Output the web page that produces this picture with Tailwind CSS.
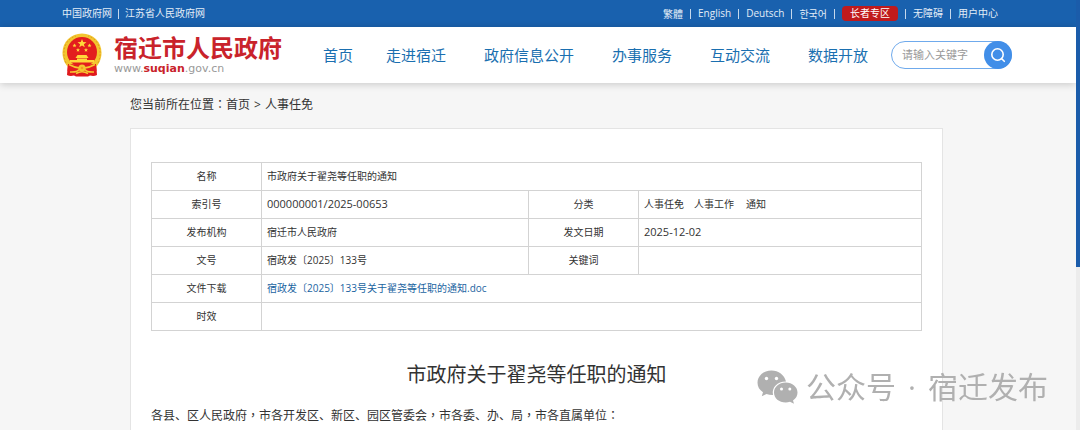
<!DOCTYPE html>
<html lang="zh-CN">
<head>
  <meta charset="UTF-8" />
  <meta name="viewport" content="width=device-width, initial-scale=1.0" />
  <title>市政府关于翟尧等任职的通知</title>
  <script src="https://cdn.jsdelivr.net/npm/@tailwindcss/browser@4"></script>
</head>
<body class="flex min-h-screen flex-col overflow-hidden bg-[#f6f6f6] pr-1 font-['Open_Sans','Noto_Sans_CJK_SC',sans-serif] text-[#333]">

  <!-- top bar -->
  <div class="bg-[#1961ae] text-[10px] leading-[27px] text-[#e3edf7]">
    <div class="mx-auto flex max-w-[952px] items-center justify-between pr-4">
      <div class="flex items-center gap-1.5">
        <a href="#">中国政府网</a>
        <span class="h-2.5 w-px bg-[#c5d8ec]"></span>
        <a href="#">江苏省人民政府网</a>
      </div>
      <div class="flex items-center gap-[7px]">
        <a href="#" lang="zh-TW" class="font-['Noto_Sans_CJK_TC',sans-serif]">繁體</a>
        <span class="h-2.5 w-px bg-[#c5d8ec]"></span>
        <a href="#" lang="en">English</a>
        <span class="h-2.5 w-px bg-[#c5d8ec]"></span>
        <a href="#" lang="de">Deutsch</a>
        <span class="h-2.5 w-px bg-[#c5d8ec]"></span>
        <a href="#" lang="ko" class="font-['Noto_Sans_CJK_KR',sans-serif]">한국어</a>
        <span class="h-2.5 w-px bg-[#c5d8ec]"></span>
        <a href="#" class="rounded bg-[#c01a1c] px-2 leading-[15px] text-white">长者专区</a>
        <span class="h-2.5 w-px bg-[#c5d8ec]"></span>
        <a href="#">无障碍</a>
        <span class="h-2.5 w-px bg-[#c5d8ec]"></span>
        <a href="#">用户中心</a>
      </div>
    </div>
  </div>

  <!-- header -->
  <header class="bg-white shadow-[0_1px_8px_rgba(0,0,0,0.2)]">
    <div class="mx-auto flex h-14 max-w-[952px] items-center pr-0.5">
      <a href="#" class="flex items-center gap-3">
        <svg class="h-11 w-10" viewBox="0 0 40 44" aria-hidden="true">
          <path d="M6 30 L5 42 Q8 43.500 12 42.500 L14 43.500 H26 L28 42.500 Q32 43.500 35 42 L34 30 Z" fill="#e0191c" />
          <path d="M20 0.500 C31 0.500 39.500 9 39.500 19.500 C39.500 26 37 31.500 33 35 L7 35 C3 31.500 0.500 26 0.500 19.500 C0.500 9 9 0.500 20 0.500 Z" fill="#f3c62f" />
          <path d="M4 30 C-1 19 3 6 14 3 M36 30 C41 19 37 6 26 3" fill="none" stroke="#dfa01f" stroke-width="1" stroke-dasharray="2 1.500" />
          <circle cx="20" cy="19" r="15" fill="#e31d1e" />
          <path d="M20 6 L21.200 9.100 L24.500 9.200 L21.900 11.200 L22.800 14.300 L20 12.500 L17.200 14.300 L18.100 11.200 L15.500 9.200 L18.800 9.100 Z" fill="#ffd83a" />
          <g fill="#ffd83a">
            <path d="M12.500 10.500 l.6 1.300 1.400.1-1.100.9.4 1.400-1.300-.8-1.300.8.4-1.400-1.100-.9 1.400-.1z" />
            <path d="M16 15 l.6 1.300 1.400.1-1.100.9.4 1.400-1.300-.8-1.300.8.4-1.400-1.100-.9 1.400-.1z" />
            <path d="M24 15 l.6 1.300 1.400.1-1.100.9.4 1.400-1.300-.8-1.300.8.4-1.400-1.100-.9 1.400-.1z" />
            <path d="M27.500 10.500 l.6 1.300 1.400.1-1.100.9.4 1.400-1.300-.8-1.300.8.4-1.400-1.100-.9 1.400-.1z" />
            <path d="M15.500 22 H24.500 L26.500 25 H13.500 Z" />
            <path d="M15 25.500 H25 V27 H32 V29.500 H8 V27 H15 Z" />
          </g>
          <path d="M6 31 Q13 30.500 17 33 Q20 29.500 23 33 Q27 30.500 34 31 L34.500 38 Q28 40 23 37.500 Q20 41 17 37.500 Q12 40 5.500 38 Z" fill="#e31d1e" />
          <path d="M7 31.500 Q13 35 20 35.500 Q27 35 33 31.500 M8 39 Q15 39.500 17 36.500 M32 39 Q25 39.500 23 36.500" fill="none" stroke="#f6c830" stroke-width="1.500" />
          <path d="M14 40.500 Q20 37 26 40.500" fill="none" stroke="#f6c830" stroke-width="1.500" />
          <circle cx="20" cy="35" r="3.600" fill="#f3c62f" />
          <circle cx="20" cy="35" r="1.300" fill="#f39a25" />
        </svg>
        <span class="flex flex-col">
          <span class="text-2xl leading-7 font-bold text-[#c9232b]">宿迁市人民政府</span>
          <span class="font-['DejaVu_Sans',sans-serif] text-[11px] leading-3.5 text-[#999]">www.<b class="text-[#c9232b]">suqian</b>.gov.cn</span>
        </span>
      </a>
      <nav class="ml-auto flex text-[15px] whitespace-nowrap text-[#1a6fb0]">
        <a href="#" class="pr-3.5">首页</a>
        <a href="#" class="px-[19px]">走进宿迁</a>
        <a href="#" class="px-[19px]">政府信息公开</a>
        <a href="#" class="px-[19px]">办事服务</a>
        <a href="#" class="px-[19px]">互动交流</a>
        <a href="#" class="px-[19px]">数据开放</a>
      </nav>
      <form class="ml-1 flex h-7 w-[121px] rounded-full border border-[#6faaec]">
        <input type="text" aria-label="搜索" placeholder="请输入关键字" class="w-0 flex-1 pl-2.5 text-[11px] outline-none placeholder:text-[#999]" />
        <button type="button" aria-label="搜索" class="-my-px -mr-px flex size-7 items-center justify-center rounded-full bg-[#418ee8]">
          <svg class="size-4" viewBox="0 0 16 16" fill="none" stroke="#fff" stroke-width="1.600" stroke-linecap="round">
            <circle cx="7.500" cy="7.500" r="5.700" />
            <path d="M11.700 11.700 L14.300 14.300" />
          </svg>
        </button>
      </form>
    </div>
  </header>

  <main class="mx-auto flex w-full max-w-[816px] flex-1 flex-col pr-[3px]">
    <div class="pt-3 pb-3.5 text-xs leading-[18px]">
      您当前所在位置<span lang="zh-TW" class="font-['Noto_Sans_CJK_TC',sans-serif]">：</span><a href="#">首页</a><span class="mx-1">&gt;</span><a href="#">人事任免</a>
    </div>

    <article class="flex-1 border border-b-0 border-[#e4e4e4] bg-white px-5 pt-[33px]">
      <table class="w-full table-fixed border-collapse text-[10px] [&_td]:border [&_td]:border-[#d3d3d3] [&_td]:px-[5px] [&_th]:border [&_th]:border-[#d3d3d3] [&_th]:font-normal [&_tr]:h-7">
        <colgroup>
          <col class="w-[110px]" />
          <col />
          <col class="w-[110px]" />
          <col class="w-[283px]" />
        </colgroup>
        <tbody>
          <tr>
            <th scope="row">名称</th>
            <td colspan="3">市政府关于翟尧等任职的通知</td>
          </tr>
          <tr>
            <th scope="row">索引号</th>
            <td class="text-[11px]">000000001/2025-00653</td>
            <th scope="row">分类</th>
            <td><span class="flex"><span class="mr-2.5">人事任免</span><span class="mr-3">人事工作</span><span>通知</span></span></td>
          </tr>
          <tr>
            <th scope="row">发布机构</th>
            <td>宿迁市人民政府</td>
            <th scope="row">发文日期</th>
            <td class="text-[11px]">2025-12-02</td>
          </tr>
          <tr>
            <th scope="row">文号</th>
            <td>宿政发〔2025〕133号</td>
            <th scope="row">关键词</th>
            <td></td>
          </tr>
          <tr>
            <th scope="row">文件下载</th>
            <td colspan="3"><a href="#" class="text-[#1a649f]">宿政发〔2025〕133号关于翟尧等任职的通知.doc</a></td>
          </tr>
          <tr>
            <th scope="row">时效</th>
            <td colspan="3"></td>
          </tr>
        </tbody>
      </table>

      <h1 class="mt-7 text-center text-xl leading-8">市政府关于翟尧等任职的通知</h1>
      <p class="mt-3.5 text-xs leading-5">各县、区人民政府<span lang="zh-TW" class="font-['Noto_Sans_CJK_TC',sans-serif]">，</span>市各开发区、新区、园区管委会<span lang="zh-TW" class="font-['Noto_Sans_CJK_TC',sans-serif]">，</span>市各委、办、局<span lang="zh-TW" class="font-['Noto_Sans_CJK_TC',sans-serif]">，</span>市各直属单位<span lang="zh-TW" class="font-['Noto_Sans_CJK_TC',sans-serif]">：</span></p>
    </article>
  </main>

  <!-- scrollbar -->
  <div class="fixed inset-y-0 right-0 w-1 bg-[#ececec]">
    <div class="h-[62%] bg-[#1b5caa]"></div>
  </div>

  <!-- watermark -->
  <div class="fixed right-8 bottom-[26px] flex items-center gap-2 text-[#b0b0b0]">
    <svg class="h-[34px] w-[41px]" viewBox="0 0 41 34" aria-hidden="true">
      <path d="M14.500 0.500 C6.500 0.500 0.500 6 0.500 12.800 C0.500 16.800 2.500 20 6 22.300 L4.800 26.300 L9.500 24 Q12.500 25 16 24.900 C14.500 17.500 20.500 11.500 29 11.600 C27.500 5 21.500 0.500 14.500 0.500 Z" fill="currentColor" />
      <path d="M28.700 12.500 C22 12.500 17 17 17 22.500 C17 28.200 22 32.500 28.700 32.500 Q31 32.500 33 31.800 L37 33.800 L36 30.400 C39 28.300 40.500 25.800 40.500 22.500 C40.500 17 35.400 12.500 28.700 12.500 Z" fill="currentColor" />
      <g fill="#fff">
        <circle cx="9.500" cy="8.500" r="1.700" />
        <circle cx="19.500" cy="8.500" r="1.700" />
        <circle cx="24.500" cy="19" r="1.500" />
        <circle cx="32.800" cy="19" r="1.500" />
      </g>
    </svg>
    <span class="flex items-center text-3xl leading-8">公众号<span class="w-8 text-center">·</span>宿迁发布</span>
  </div>

</body>
</html>
